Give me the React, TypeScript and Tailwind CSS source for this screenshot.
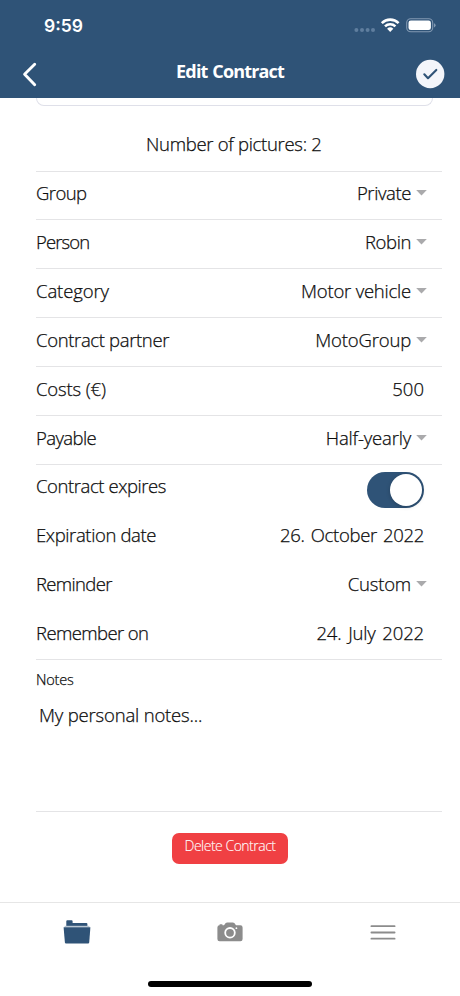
import type { ReactNode } from "react";

type RowProps = {
  label: string;
  labelClass?: string;
  value?: string;
  valueClass?: string;
  select?: boolean;
  line?: boolean;
  children?: ReactNode;
};

function Row({ label, labelClass = "", value, valueClass = "", select, line, children }: RowProps) {
  return (
    <div
      className={`flex h-[48.85px] items-start justify-between border-t pr-[18px] ${
        line ? "border-[#e4e4e6]" : "border-transparent"
      }`}
    >
      <span className={`pt-[8.8px] leading-[26px] ${labelClass}`}>{label}</span>
      {children}
      {value && (
        <span className={`flex pt-[8.8px] leading-[26px] ${select ? "-mr-[3px]" : ""}`}>
          <span className={valueClass}>{value}</span>
          {select && (
            <svg className="ml-[5px] mt-[10px] h-[6px] w-[11px]" viewBox="0 0 11 6">
              <path d="M0.2 0H10.8L5.5 5.6Z" fill="#aaaaac" />
            </svg>
          )}
        </span>
      )}
    </div>
  );
}

function StatusBar() {
  return (
    <div className="flex h-[50px] items-start justify-between pl-[44px] pr-[24px] text-white">
      <span className="pt-[14px] font-['Inter',sans-serif] text-[17.5px] font-semibold leading-[24px]">9:59</span>
      <div className="flex pt-[17px]">
        <svg className="h-[16px] w-[22px]" viewBox="0 0 22 16" fill="#5f7e9e">
          <circle cx="3.4" cy="13" r="2" />
          <circle cx="9" cy="13" r="2" />
          <circle cx="14.6" cy="13" r="2" />
          <circle cx="20" cy="13" r="2" />
        </svg>
        <svg className="ml-[5px] h-[16px] w-[20px]" viewBox="0 0 20 16" fill="none" stroke="#fff" strokeWidth="2.6">
          <path d="M1.8 6.1A12 12 0 0 1 18.6 6.1" />
          <path d="M5 9.4A7.5 7.5 0 0 1 15.4 9.4" />
          <path d="M10.2 15L7.1 11.8A4.5 4.5 0 0 1 13.3 11.8Z" fill="#fff" stroke="none" />
        </svg>
        <svg className="ml-[6px] h-[16px] w-[30px]" viewBox="0 0 30 16">
          <rect x="0.7" y="1.7" width="26" height="13" rx="4" fill="none" stroke="#8299b2" strokeWidth="1.1" />
          <rect x="2.5" y="3.5" width="22.4" height="9.5" rx="2.3" fill="#fff" />
          <path d="M28 6.2Q29.6 6.8 29.6 8.3T28 10.4Z" fill="#8299b2" />
        </svg>
      </div>
    </div>
  );
}

export default function App() {
  return (
    <div className="flex h-[996px] w-[460px] flex-col overflow-hidden bg-white font-['Open_Sans','Noto_Sans',sans-serif] text-[18.5px] font-light text-[#0c0c0c]">
      <header className="h-[98px] shrink-0 bg-[#2f5377]">
        <StatusBar />
        <div className="flex h-[48px] items-center justify-between pl-[22px] pr-[15px]">
          <svg className="h-[26px] w-[16px]" viewBox="0 0 16 26" fill="none" stroke="#fff" strokeWidth="2.9" strokeLinecap="round" strokeLinejoin="round">
            <path d="M12.7 3.2L2.6 13.2L12.7 23.8" />
          </svg>
          <h1 className="ml-[7px] -mt-[6px] text-[18px] font-bold leading-[24px] tracking-[-0.85px] text-white [word-spacing:1px]">Edit Contract</h1>
          <svg className="h-[30px] w-[30px]" viewBox="0 0 30 30">
            <circle cx="15.2" cy="15" r="14.2" fill="#f3f5fa" />
            <path d="M9.3 15.3L13 19.2L21.3 10.9" fill="none" stroke="#2f5377" strokeWidth="2.1" strokeLinecap="round" strokeLinejoin="round" />
          </svg>
        </div>
      </header>

      <main className="flex h-[804px] shrink-0 flex-col pl-[36px] pr-[18px] [-webkit-text-stroke:0.25px]">
        <div className="h-[8px] w-[397px] shrink-0 rounded-b-[11px] border border-t-0 border-[#dfe0e9]" />
        <p className="h-[64.6px] shrink-0 pl-[110px] pt-[25px] leading-[26px] tracking-[-0.3px]">Number of pictures: 2</p>
        <Row label="Group" labelClass="tracking-[-0.6px]" value="Private" valueClass="tracking-[-0.4px]" select line />
        <Row label="Person" labelClass="tracking-[-0.9px]" value="Robin" valueClass="tracking-[-0.4px]" select line />
        <Row label="Category" labelClass="tracking-[-0.1px]" value="Motor vehicle" valueClass="tracking-[-0.22px]" select line />
        <Row label="Contract partner" labelClass="tracking-[-0.35px]" value="MotoGroup" valueClass="tracking-[-0.17px]" select line />
        <Row label="Costs (€)" labelClass="tracking-[-0.15px]" value="500" line />
        <Row label="Payable" labelClass="tracking-[-0.6px]" value="Half-yearly" valueClass="tracking-[-0.18px]" select line />
        <Row label="Contract expires" labelClass="tracking-[-0.42px]" line>
          <span className="mt-[7px] flex h-[36px] w-[57px] justify-end rounded-full bg-[#2f5377] p-[2px]">
            <span className="h-[32px] w-[32px] rounded-full bg-white shadow-[0_1px_4px_rgba(0,0,0,0.2)]" />
          </span>
        </Row>
        <Row label="Expiration date" labelClass="tracking-[-0.38px]" value="26. October 2022" valueClass="tracking-[-0.3px] [word-spacing:1.5px]" />
        <Row label="Reminder" labelClass="tracking-[-0.65px]" value="Custom" valueClass="tracking-[-0.2px]" select />
        <Row label="Remember on" labelClass="tracking-[-0.6px]" value="24. July 2022" valueClass="tracking-[-0.15px] [word-spacing:2px]" />
        <section className="flex h-[153px] shrink-0 flex-col border-y border-[#e4e4e6]">
          <h2 className="pt-[10px] text-[14.5px] leading-[20px] tracking-[-0.2px]">Notes</h2>
          <p className="pl-[3px] pt-[12px] leading-[26px] tracking-[-0.18px]">My personal notes...</p>
        </section>
        <button className="ml-[136px] mt-[21px] flex h-[31px] w-[116px] shrink-0 justify-center rounded-[7px] bg-[#f04043] pt-[3px] text-[14px] font-light leading-[20px] tracking-[-0.5px] text-white [-webkit-text-stroke:0.1px]">
          Delete Contract
        </button>
      </main>

      <nav className="flex grow flex-col justify-between border-t border-[#e6e6e6]">
        <div className="flex h-[58px] items-center">
          <span className="flex flex-1 justify-center">
            <svg className="h-[26px] w-[28px]" viewBox="0 0 28 26" fill="#2f5377">
              <path d="M3.3 2.2Q3.3 1.2 4.3 1.2H8.6Q9.6 1.2 9.6 2.2V3.9H23.4Q24.4 3.9 24.4 4.9V7H3.3Z" />
              <path d="M1.6 6.8H26.4V8.3H1.6Z" fill="#b9c7d4" />
              <path d="M0.6 8.2H27.4L26.2 23.5Q26.1 24.5 25.1 24.5H3Q2 24.5 1.9 23.5Z" />
            </svg>
          </span>
          <span className="flex flex-1 justify-center">
            <svg className="h-[20px] w-[26px]" viewBox="0 0 26 20">
              <path d="M2.5 3.2V2.8Q2.5 2.3 3 2.3H5Q5.5 2.3 5.5 2.8V3.2H7L8.7 1Q9.3 0.4 10.2 0.4H15.8Q16.7 0.4 17.3 1L19 3.2H23.4Q25.6 3.2 25.6 5.4V17Q25.6 19.2 23.4 19.2H2.6Q0.4 19.2 0.4 17V5.4Q0.4 3.2 2.5 3.2Z" fill="#8c8c8c" />
              <circle cx="13" cy="10.8" r="4.8" fill="none" stroke="#fff" strokeWidth="1.8" />
              <circle cx="19.4" cy="6.2" r="0.9" fill="#fff" />
            </svg>
          </span>
          <span className="flex flex-1 justify-center">
            <svg className="h-[17px] w-[26px]" viewBox="0 0 26 17" stroke="#8c8c8c" strokeWidth="1.8" strokeLinecap="round">
              <path d="M1.4 2.2H24.6M1.4 8.5H24.6M1.4 14.7H24.6" />
            </svg>
          </span>
        </div>
        <div className="mb-[9px] h-[6px] w-[164px] self-center rounded-full bg-black" />
      </nav>
    </div>
  );
}
